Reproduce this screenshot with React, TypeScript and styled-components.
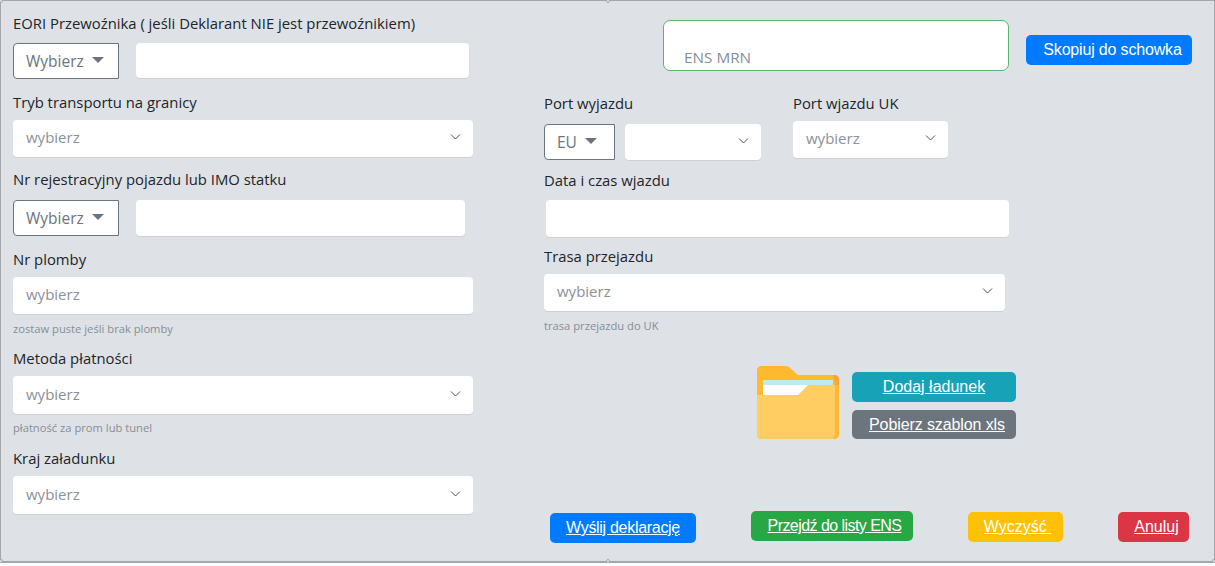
import styled, { createGlobalStyle } from "styled-components";

const GlobalStyle = createGlobalStyle`
  html, body {
    margin: 0;
    padding: 0;
    background: #fff;
  }
`

const Panel = styled.form`
  box-sizing: border-box;
  position: relative;
  width: 1215px;
  height: 563px;
  display: grid;
  grid-template-columns: 531px 1fr;
  background: #dee2e6;
  border: 1px solid #a4a7aa;
  border-bottom-width: 2px;
  font-family: "Open Sans", "Liberation Sans", sans-serif;
  color: #212529;
`

const Handle = styled.span<{ $x: string; $y: string }>`
  position: absolute;
  left: ${(p) => p.$x};
  top: ${(p) => p.$y};
  width: 4px;
  height: 4px;
  margin: -2px 0 0 -2px;
  background: #e8eaec;
  border: 1px solid #a4a7aa;
  border-radius: 50%;
  box-sizing: border-box;
`

const Column = styled.div`
  display: flex;
  flex-direction: column;
  align-items: flex-start;
`

const LeftColumn = styled(Column)`
  padding: 13px 0 0 12px;
`

const RightColumn = styled(Column)`
  padding: 19px 0 0 12px;
`

const Label = styled.label<{ $top?: number }>`
  display: block;
  height: 20px;
  line-height: 18px;
  font-size: 14.85px;
  white-space: nowrap;
  margin-top: ${(p) => p.$top ?? 0}px;
`

const Row = styled.div<{ $top?: number; $gap?: number }>`
  display: flex;
  align-items: flex-start;
  margin-top: ${(p) => p.$top ?? 0}px;
  gap: ${(p) => p.$gap ?? 0}px;
`

const Dropdown = styled.button<{ $width: number }>`
  box-sizing: border-box;
  width: ${(p) => p.$width}px;
  height: 36px;
  padding: 0 0 0 12px;
  display: flex;
  align-items: center;
  gap: 8px;
  flex: none;
  background: #fff;
  border: 1px solid #6c757d;
  border-radius: 4px 0 0 4px;
  color: #6c757d;
  font-family: inherit;
  font-size: 15.5px;
`

const Caret = styled.span`
  width: 0;
  height: 0;
  margin-top: -2px;
  border-top: 6px solid #6c757d;
  border-left: 6px solid transparent;
  border-right: 6px solid transparent;
`

const TextBox = styled.div<{ $width: number; $height?: number; $top?: number; $left?: number }>`
  box-sizing: border-box;
  width: ${(p) => p.$width}px;
  height: ${(p) => p.$height ?? 36}px;
  margin-top: ${(p) => p.$top ?? 0}px;
  margin-left: ${(p) => p.$left ?? 0}px;
  flex: none;
  display: flex;
  align-items: center;
  padding: 0 13px 3px;
  background: #fff;
  border-radius: 4px;
  box-shadow: 0 1px 0 rgba(108, 117, 125, 0.15);
  color: #8b9198;
  font-size: 15px;
`

const SelectBox = styled(TextBox)`
  justify-content: space-between;
  padding-right: 12px;
`

const Hint = styled.small<{ $top?: number }>`
  display: block;
  height: 14px;
  line-height: 14px;
  margin-top: ${(p) => p.$top ?? 0}px;
  font-size: 11.2px;
  color: #868e96;
  white-space: nowrap;
`

const MrnBox = styled.div`
  box-sizing: border-box;
  width: 346px;
  height: 51px;
  padding: 27px 0 0 20px;
  background: #fff;
  border: 1px solid #5cb270;
  border-radius: 7px;
  color: #868e96;
  font-size: 15.3px;
  line-height: 18px;
`

const HeaderRow = styled.div`
  display: flex;
  align-items: flex-start;
  margin-left: 119px;
  gap: 17px;
`

const PortGroup = styled.div<{ $left?: number }>`
  display: flex;
  flex-direction: column;
  margin-left: ${(p) => p.$left ?? 0}px;
`

const ActionButton = styled.a<{
  $bg: string
  $width: number
  $height?: number
  $left?: number
  $top?: number
  $tight?: number
  $shift?: number
}>`
  box-sizing: border-box;
  width: ${(p) => p.$width}px;
  height: ${(p) => p.$height ?? 30}px;
  margin-left: ${(p) => p.$left ?? 0}px;
  margin-top: ${(p) => p.$top ?? 0}px;
  padding-left: ${(p) => p.$shift ?? 0}px;
  display: flex;
  align-items: center;
  justify-content: center;
  flex: none;
  background: ${(p) => p.$bg};
  border-radius: 5px;
  color: #fff;
  font-family: "Liberation Sans", Arial, sans-serif;
  font-size: 16px;
  letter-spacing: ${(p) => p.$tight ?? 0}px;
  text-decoration: underline;
  white-space: nowrap;
`

const CopyButton = styled(ActionButton)`
  text-decoration: none;
  margin-top: 15px;
`

const FileArea = styled.div`
  display: flex;
  align-items: flex-start;
  margin: 33px 0 0 213px;
  gap: 13px;
`

const FileButtons = styled.div`
  display: flex;
  flex-direction: column;
  gap: 8px;
  padding-top: 6px;
`

const ActionRow = styled.div`
  display: flex;
  align-items: flex-start;
  margin: 72px 0 0 6px;
`

function Chevron() {
  return (
    <svg width="11" height="6" viewBox="0 0 11 6" fill="none" style={{ flex: "none" }}>
      <path d="M1 0.5 L5.5 5 L10 0.5" stroke="#495057" strokeWidth="1" />
    </svg>
  )
}

function FolderIcon() {
  return (
    <svg width="82" height="73" viewBox="0 0 82 73">
      <path d="M4 0 H29 C30 0 31 0 32 1 L41 9 H78 C80 9 82 11 82 13 V69 C82 71 80 73 78 73 H4 C2 73 0 71 0 69 V4 C0 2 2 0 4 0 Z" fill="#ffb92e" />
      <path d="M76 9 H78 C80 9 82 11 82 13 V19 H78 Z" fill="#f9a53d" />
      <rect x="6" y="14" width="70" height="16" fill="#fff" />
      <rect x="6" y="14" width="70" height="5" fill="#bcebf5" />
      <path d="M0 29 H41 L51 19 H78 V69 C78 71 76 73 74 73 H4 C2 73 0 71 0 69 Z" fill="#ffcd62" />
    </svg>
  )
}

function Select({ text, width, height, top }: { text?: string; width: number; height?: number; top?: number }) {
  return (
    <SelectBox $width={width} $height={height ?? 37} $top={top}>
      <span>{text}</span>
      <Chevron />
    </SelectBox>
  )
}

export default function App() {
  return (
    <>
      <GlobalStyle />
      <Panel>
        <LeftColumn>
          <Label>EORI Przewoźnika ( jeśli Deklarant NIE jest przewoźnikiem)</Label>
          <Row $top={9} $gap={17}>
            <Dropdown $width={106} type="button">Wybierz <Caret /></Dropdown>
            <TextBox $width={333} $height={35} />
          </Row>
          <Label $top={14}>Tryb transportu na granicy</Label>
          <Select text="wybierz" width={460} top={7} />
          <Label $top={13}>Nr rejestracyjny pojazdu lub IMO statku</Label>
          <Row $top={10} $gap={17}>
            <Dropdown $width={106} type="button">Wybierz <Caret /></Dropdown>
            <TextBox $width={329} />
          </Row>
          <Label $top={14}>Nr plomby</Label>
          <TextBox $width={460} $height={37} $top={7}>wybierz</TextBox>
          <Hint $top={8}>zostaw puste jeśli brak plomby</Hint>
          <Label $top={13}>Metoda płatności</Label>
          <Select text="wybierz" width={460} height={38} top={7} />
          <Hint $top={7}>płatność za prom lub tunel</Hint>
          <Label $top={14}>Kraj załadunku</Label>
          <Select text="wybierz" width={460} height={38} top={7} />
        </LeftColumn>
        <RightColumn>
          <HeaderRow>
            <MrnBox>ENS MRN</MrnBox>
            <CopyButton $bg="#007bff" $width={166} $tight={-0.17} $shift={7}>Skopiuj do schowka</CopyButton>
          </HeaderRow>
          <Row $top={23}>
            <PortGroup>
              <Label>Port wyjazdu</Label>
              <Row $top={10} $gap={10}>
                <Dropdown $width={71} type="button">EU <Caret /></Dropdown>
                <Select width={136} height={36} />
              </Row>
            </PortGroup>
            <PortGroup $left={32}>
              <Label>Port wjazdu UK</Label>
              <Select text="wybierz" width={155} top={7} />
            </PortGroup>
          </Row>
          <Label $top={11}>Data i czas wjazdu</Label>
          <TextBox $width={463} $height={37} $top={9} $left={2} />
          <Label $top={10}>Trasa przejazdu</Label>
          <Select text="wybierz" width={461} top={7} />
          <Hint $top={8}>trasa przejazdu do UK</Hint>
          <FileArea>
            <FolderIcon />
            <FileButtons>
              <ActionButton $bg="#17a2b8" $width={164}>Dodaj ładunek</ActionButton>
              <ActionButton $bg="#6c757d" $width={164} $height={29} $tight={-0.1} $shift={6}>Pobierz szablon xls</ActionButton>
            </FileButtons>
          </FileArea>
          <ActionRow>
            <ActionButton $bg="#007bff" $width={146} $top={2} $tight={-0.3}>Wyślij deklarację</ActionButton>
            <ActionButton $bg="#28a745" $width={162} $left={55} $tight={-0.55} $shift={5}>Przejdź do listy ENS</ActionButton>
            <ActionButton $bg="#ffc107" $width={95} $left={55} $top={1} $shift={4}>Wyczyść&nbsp;</ActionButton>
            <ActionButton $bg="#dc3545" $width={71} $left={55} $top={1} $shift={6}>Anuluj</ActionButton>
          </ActionRow>
        </RightColumn>
        <Handle $x="0" $y="0" />
        <Handle $x="50%" $y="0" />
        <Handle $x="0" $y="100%" />
        <Handle $x="50%" $y="100%" />
        <Handle $x="100%" $y="100%" />
      </Panel>
    </>
  )
}
